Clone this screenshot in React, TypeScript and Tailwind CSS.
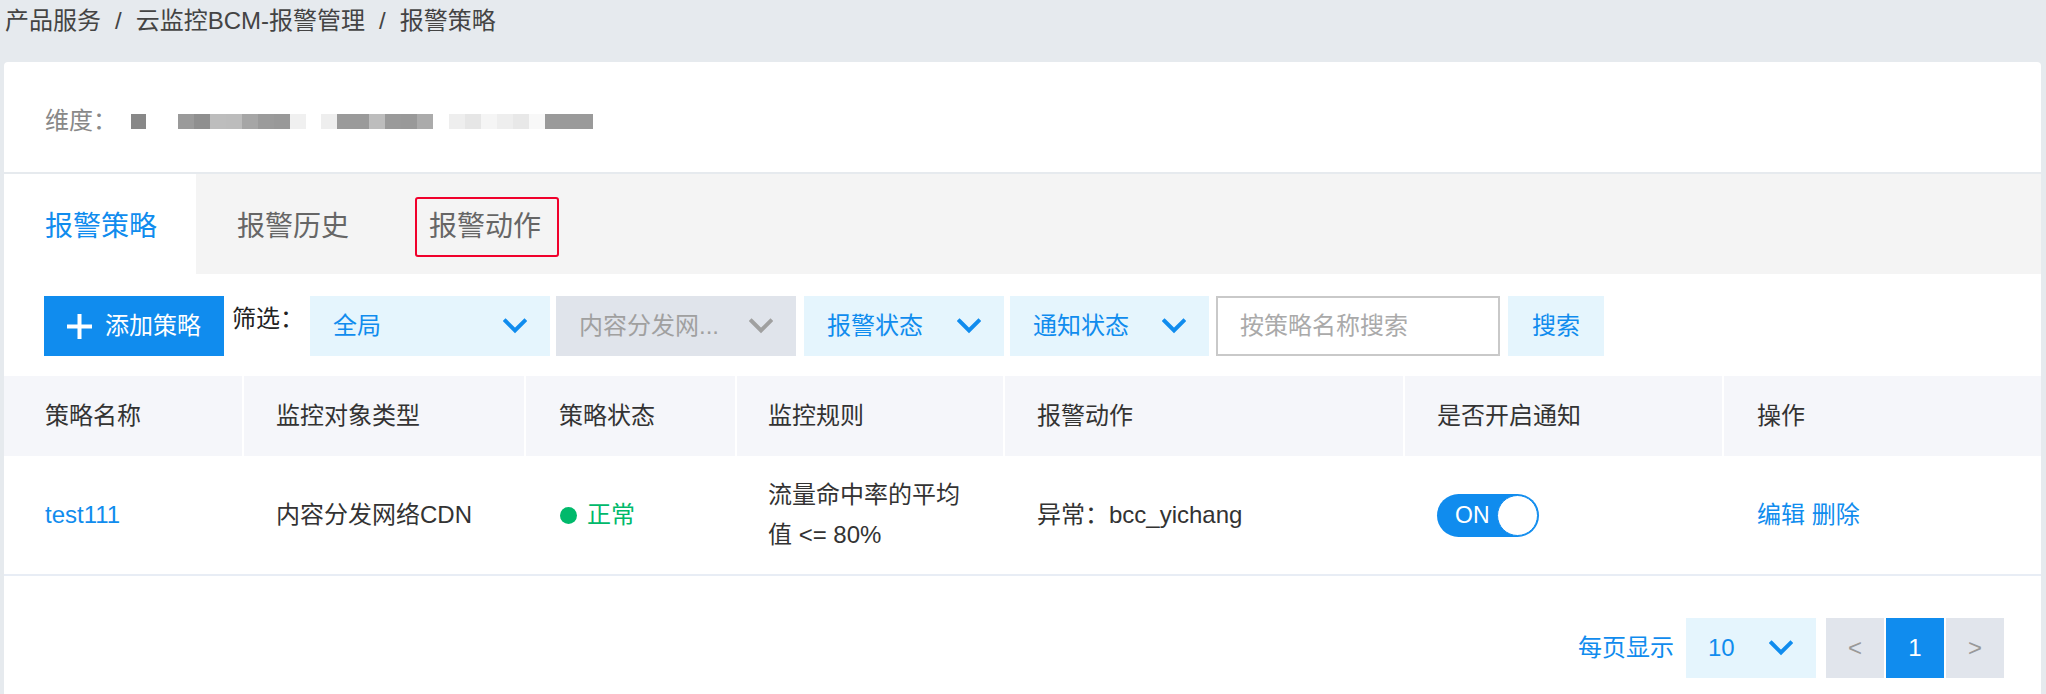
import React from 'react';

const fontStack = "font-['Liberation_Sans','Noto_Sans_CJK_SC',sans-serif]";

const mosaicA = ['bg-[#9a9a9a]', 'bg-[#8f8f8f]', 'bg-[#bdbdbd]', 'bg-[#bcbcbc]', 'bg-[#a6a6a6]', 'bg-[#9b9b9b]', 'bg-[#999999]', 'bg-[#f0f0f0]'];
const mosaicB = ['bg-[#eeeeee]', 'bg-[#9a9a9a]', 'bg-[#9a9a9a]', 'bg-[#bdbdbd]', 'bg-[#9a9a9a]', 'bg-[#999999]', 'bg-[#ababab]'];
const mosaicC = ['bg-[#eeeeee]', 'bg-[#e6e6e6]', 'bg-[#f5f5f5]', 'bg-[#eeeeee]', 'bg-[#e8e8e8]', 'bg-[#f8f8f8]', 'bg-[#9a9a9a]', 'bg-[#9a9a9a]', 'bg-[#9a9a9a]'];

const crumbs = ['产品服务', '云监控BCM-报警管理', '报警策略'];

const columns = [
  { title: '策略名称', w: 'w-[238px] pl-[41px]' },
  { title: '监控对象类型', w: 'w-[282px] pl-[32px] border-l-2 border-white' },
  { title: '策略状态', w: 'w-[211px] pl-[33px] border-l-2 border-white' },
  { title: '监控规则', w: 'w-[268px] pl-[31px] border-l-2 border-white' },
  { title: '报警动作', w: 'w-[400px] pl-[32px] border-l-2 border-white' },
  { title: '是否开启通知', w: 'w-[319px] pl-[32px] border-l-2 border-white' },
  { title: '操作', w: 'w-[319px] pl-[33px] border-l-2 border-white' },
];

function Chevron({ className }: { className?: string }) {
  return (
    <svg viewBox="0 0 24 16" className={className} fill="none">
      <path d="M2.5 3 L12 12.5 L21.5 3" stroke="currentColor" strokeWidth="4" strokeLinecap="square" />
    </svg>
  );
}

function Mosaic({ cells, className }: { cells: string[]; className?: string }) {
  return (
    <div className={`flex ${className ?? ''}`}>
      {cells.map((c, i) => (
        <span key={i} className={`block w-[16px] h-[15px] ${c}`} />
      ))}
    </div>
  );
}

function Select({
  label,
  width,
  muted,
}: {
  label: string;
  width: string;
  muted?: boolean;
}) {
  return (
    <div
      className={`${width} h-[60px] flex items-center justify-between pl-[23px] pr-[23px] ${
        muted ? 'bg-[#e0e4eb] text-[#a0a0a0]' : 'bg-[#e5f5fd] text-[#108cee]'
      }`}
    >
      <span className="text-[24px] leading-[30px]">{label}</span>
      <Chevron className="w-[24px] h-[16px]" />
    </div>
  );
}

export default function App() {
  return (
    <div className={`min-h-[694px] bg-[#e6eaee] ${fontStack} text-[#333]`}>
      {/* Breadcrumb */}
      <div className="h-[62px] pl-[5px] pt-[3px] flex items-start text-[24px] leading-[36px] text-[#444]">
        {crumbs.map((c, i) => (
          <React.Fragment key={c}>
            {i > 0 && <span className="mx-[14px]">/</span>}
            <span>{c}</span>
          </React.Fragment>
        ))}
      </div>

      <div className="ml-[4px] mr-[5px]">
        {/* Dimension panel */}
        <div className="h-[110px] bg-white rounded-t-[4px] flex items-center pl-[41px] pt-[8px]">
          <span className="w-[86px] text-[24px] leading-[30px] text-[#888]">维度：</span>
          <span className="block w-[15px] h-[15px] bg-[#888]" />
          <Mosaic cells={mosaicA} className="ml-[32px]" />
          <Mosaic cells={mosaicB} className="ml-[15px]" />
          <Mosaic cells={mosaicC} className="ml-[16px]" />
        </div>

        <div className="mt-[2px] bg-white pb-[40px]">
          {/* Tabs */}
          <div className="h-[100px] bg-[#f4f4f4] flex">
            <div className="w-[192px] bg-white flex items-center pt-[6px] pl-[41px] text-[28px] leading-[36px] text-[#108cee]">
              报警策略
            </div>
            <div className="w-[192px] flex items-center pt-[6px] pl-[41px] text-[28px] leading-[36px] text-[#666]">
              报警历史
            </div>
            <div className="flex items-center pt-[6px] pl-[27px]">
              <span className="h-[60px] flex items-center border-2 border-[#f0002b] rounded-[3px] pl-[12px] pr-[16px] text-[28px] leading-[36px] text-[#666]">
                报警动作
              </span>
            </div>
          </div>

          {/* Toolbar */}
          <div className="mt-[22px] h-[60px] flex items-center pl-[40px]">
            <button className="w-[180px] h-[60px] bg-[#108cee] text-white flex items-center pl-[23px]">
              <svg viewBox="0 0 25 25" className="w-[25px] h-[25px]">
                <rect x="10.5" y="0" width="4" height="25" fill="currentColor" />
                <rect x="0" y="10.5" width="25" height="4" fill="currentColor" />
              </svg>
              <span className="ml-[13px] text-[24px] leading-[30px]">添加策略</span>
            </button>
            <span className="ml-[8px] w-[78px] self-start mt-[8px] text-[24px] leading-[30px] text-[#222]">筛选：</span>
            <Select label="全局" width="w-[240px]" />
            <div className="ml-[6px]">
              <Select label="内容分发网..." width="w-[240px]" muted />
            </div>
            <div className="ml-[8px]">
              <Select label="报警状态" width="w-[200px]" />
            </div>
            <div className="ml-[6px]">
              <Select label="通知状态" width="w-[199px]" />
            </div>
            <div className="ml-[7px] w-[284px] h-[60px] border-2 border-[#c9c9c9] flex items-center pl-[22px] text-[24px] leading-[30px] text-[#aaa]">
              按策略名称搜索
            </div>
            <button className="ml-[8px] w-[96px] h-[60px] bg-[#e5f5fd] text-[#108cee] text-[24px] leading-[30px]">
              搜索
            </button>
          </div>

          {/* Table */}
          <div className="mt-[20px]">
            <div className="h-[80px] bg-[#f5f6fa] flex">
              {columns.map((c) => (
                <div key={c.title} className={`${c.w} flex items-center text-[24px] leading-[30px] text-[#333]`}>
                  {c.title}
                </div>
              ))}
            </div>
            <div className="h-[120px] flex border-b-2 border-[#e8edf5] text-[24px] leading-[40px]">
              <div className="w-[238px] pl-[41px] flex items-center text-[#108cee]">test111</div>
              <div className="w-[282px] pl-[34px] flex items-center">内容分发网络CDN</div>
              <div className="w-[211px] pl-[36px] flex items-center text-[#00b96b]">
                <span className="block w-[17px] h-[17px] rounded-full bg-[#00b96b]" />
                <span className="ml-[10px]">正常</span>
              </div>
              <div className="w-[268px] pl-[33px] flex flex-col justify-center">
                <span>流量命中率的平均</span>
                <span>值 &lt;= 80%</span>
              </div>
              <div className="w-[400px] pl-[34px] flex items-center">异常：bcc_yichang</div>
              <div className="w-[319px] pl-[34px] flex items-center">
                <div className="w-[102px] h-[43px] rounded-full bg-[#108cee] flex items-center justify-between pl-[18px] pr-[1px]">
                  <span className="text-white text-[23px] leading-[30px]">ON</span>
                  <span className="block w-[41px] h-[41px] rounded-full bg-white border border-[#108cee]" />
                </div>
              </div>
              <div className="w-[319px] pl-[35px] flex items-center text-[#108cee]">编辑 删除</div>
            </div>

            {/* Pagination */}
            <div className="mt-[42px] flex items-center justify-end pr-[37px]">
              <span className="text-[24px] leading-[30px] text-[#108cee]">每页显示</span>
              <div className="ml-[12px] w-[130px] h-[60px] bg-[#e5f5fd] text-[#108cee] flex items-center justify-between pl-[22px] pr-[23px]">
                <span className="text-[24px] leading-[30px]">10</span>
                <Chevron className="w-[24px] h-[16px]" />
              </div>
              <div className="ml-[10px] flex gap-[2px]">
                <div className="w-[58px] h-[60px] bg-[#e1e5ec] flex items-center justify-center text-[24px] text-[#999]">&lt;</div>
                <div className="w-[58px] h-[60px] bg-[#108cee] flex items-center justify-center text-[24px] text-white">1</div>
                <div className="w-[58px] h-[60px] bg-[#e1e5ec] flex items-center justify-center text-[24px] text-[#999]">&gt;</div>
              </div>
            </div>
          </div>
        </div>
      </div>
    </div>
  );
}
